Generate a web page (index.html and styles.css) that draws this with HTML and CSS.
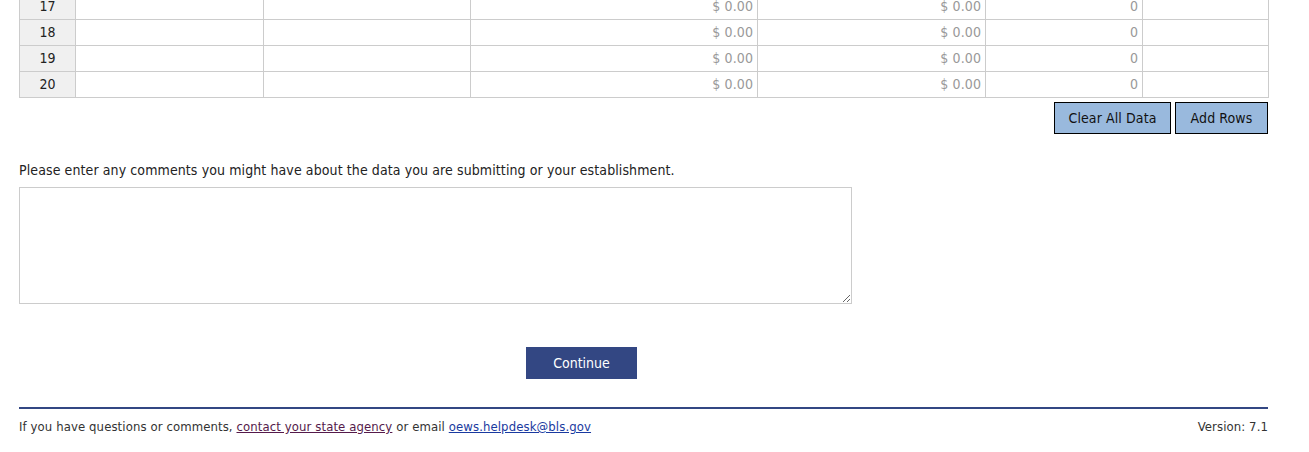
FILE: index.html
```html
<!DOCTYPE html>
<html>
<head>
<meta charset="utf-8">
<link rel="stylesheet" href="styles.css">
</head>
<body>
<div class="page">
  <table class="grid">
    <colgroup>
      <col class="c-num"><col class="c-a"><col class="c-b"><col class="c-c"><col class="c-d"><col class="c-e"><col class="c-f">
    </colgroup>
    <tr><td class="num">17</td><td></td><td></td><td class="val">$ 0.00</td><td class="val">$ 0.00</td><td class="val">0</td><td></td></tr>
    <tr><td class="num">18</td><td></td><td></td><td class="val">$ 0.00</td><td class="val">$ 0.00</td><td class="val">0</td><td></td></tr>
    <tr><td class="num">19</td><td></td><td></td><td class="val">$ 0.00</td><td class="val">$ 0.00</td><td class="val">0</td><td></td></tr>
    <tr><td class="num">20</td><td></td><td></td><td class="val">$ 0.00</td><td class="val">$ 0.00</td><td class="val">0</td><td></td></tr>
  </table>
  <div class="actions">
    <button class="btn btn-clear">Clear All Data</button>
    <button class="btn btn-add">Add Rows</button>
  </div>
  <p class="prompt">Please enter any comments you might have about the data you are submitting or your establishment.</p>
  <textarea class="comments"></textarea>
  <div class="submit">
    <button class="continue">Continue</button>
  </div>
  <footer class="footer">
    <span>If you have questions or comments, <a class="visited" href="#">contact your state agency</a> or email <a class="mail" href="#">oews.helpdesk@bls.gov</a></span>
    <span>Version: 7.1</span>
  </footer>
</div>
</body>
</html>
```
FILE: styles.css
```css
html, body {
  margin: 0;
  padding: 0;
  background: #fff;
}
body {
  font-family: "DejaVu Sans Condensed", "DejaVu Sans", sans-serif;
  font-size: 13px;
  letter-spacing: 0.1px;
  color: #222;
  overflow: hidden;
}
.page {
  width: 1249px;
  margin-left: 19px;
}
.grid {
  border-collapse: collapse;
  table-layout: fixed;
  width: 1249px;
  margin-top: -7px;
}
.c-num { width: 56px; }
.c-a { width: 188px; }
.c-b { width: 207px; }
.c-c { width: 287px; }
.c-d { width: 228px; }
.c-e { width: 157px; }
.c-f { width: 126px; }
.grid td {
  border: 1px solid #cccccc;
  height: 26px;
  padding: 0 4px 2px;
  box-sizing: border-box;
  font-size: 14px;
}
.grid td.num {
  background: #f0f0f0;
  text-align: center;
  color: #222;
}
.grid td.val {
  text-align: right;
  color: #999;
}
.actions {
  display: flex;
  justify-content: flex-end;
  gap: 4px;
  margin-top: 4px;
}
.btn {
  font-family: inherit;
  font-size: 14px;
  letter-spacing: 0.1px;
  color: #111;
  background: #99b9dd;
  border: 1px solid #000;
  height: 32px;
  padding: 0;
  margin: 0;
  cursor: pointer;
}
.btn-clear { width: 117px; }
.btn-add { width: 93px; }
.prompt {
  margin: 27px 0 0;
  font-size: 14px;
  line-height: 19px;
}
.comments {
  display: block;
  width: 833px;
  height: 117px;
  box-sizing: border-box;
  margin-top: 7px;
  border: 1px solid #cccccc;
  resize: vertical;
  font-family: inherit;
}
.submit {
  display: flex;
  justify-content: center;
  width: 1125px;
  margin-top: 43px;
}
.continue {
  font-family: inherit;
  font-size: 14px;
  color: #fff;
  background: #334783;
  border: none;
  height: 32px;
  width: 111px;
  padding: 0;
  cursor: pointer;
}
.footer {
  margin-top: 28px;
  border-top: 2px solid #334783;
  display: flex;
  justify-content: space-between;
  padding-top: 9px;
  font-size: 13px;
  line-height: 18px;
  color: #333;
}
.footer a.visited {
  color: #551a4b;
}
.footer a.mail {
  color: #1a3aa0;
}
```
